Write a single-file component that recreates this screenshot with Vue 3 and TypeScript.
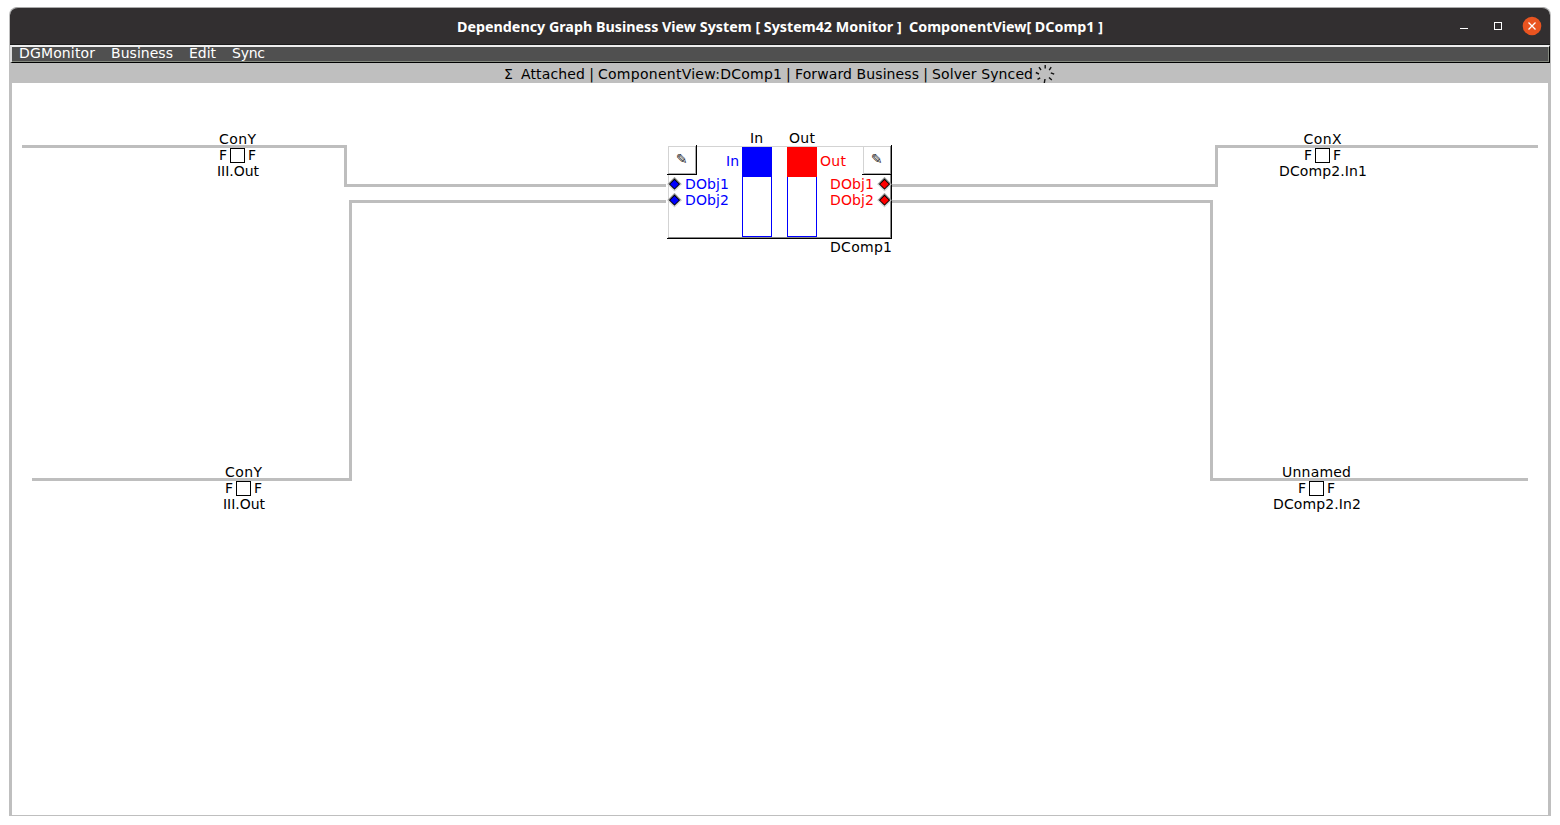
<script setup lang="ts">
interface Label {
  text: string
  x: number
  y: number
  w: number
  color?: string
}

interface Connector {
  name: string
  target: string
  cx: number
  y: number
  nameW: number
  targetW: number
}

const menus: { text: string; w: number }[] = [
  { text: 'DGMonitor', w: 76 },
  { text: 'Business', w: 62 },
  { text: 'Edit', w: 27 },
  { text: 'Sync', w: 33 },
]

const wires: string[] = [
  'M22 146.5H345.5V185.5H666',
  'M32 479.5H350.5V201.5H666',
  'M892 185.5H1216.5V146.5H1538',
  'M892 201.5H1211.5V479.5H1528',
]

const connectors: Connector[] = [
  { name: 'ConY', target: 'III.Out', cx: 237.5, y: 144, nameW: 37, targetW: 42 },
  { name: 'ConY', target: 'III.Out', cx: 243.5, y: 477, nameW: 37, targetW: 42 },
  { name: 'ConX', target: 'DComp2.In1', cx: 1322.5, y: 144, nameW: 38, targetW: 88 },
  { name: 'Unnamed', target: 'DComp2.In2', cx: 1316.5, y: 477, nameW: 69, targetW: 88 },
]

const labels: Label[] = [
  { text: 'In', x: 750, y: 143, w: 13 },
  { text: 'Out', x: 789, y: 143, w: 26 },
  { text: 'In', x: 726, y: 166, w: 13, color: '#00f' },
  { text: 'Out', x: 820, y: 166, w: 26, color: '#f00' },
  { text: 'DObj1', x: 685, y: 189, w: 44, color: '#00f' },
  { text: 'DObj2', x: 685, y: 205, w: 44, color: '#00f' },
  { text: 'DObj1', x: 830, y: 189, w: 44, color: '#f00' },
  { text: 'DObj2', x: 830, y: 205, w: 44, color: '#f00' },
  { text: 'DComp1', x: 830, y: 252, w: 62 },
]

const ports: { x: number; y: number; color: string }[] = [
  { x: 674.5, y: 184.2, color: '#00f' },
  { x: 674.5, y: 200.2, color: '#00f' },
  { x: 884.5, y: 184.2, color: '#f00' },
  { x: 884.5, y: 200.2, color: '#f00' },
]
</script>

<template>
  <div class="desktop">
    <div class="window">
      <header class="titlebar">
        <svg class="title" width="1300" height="36">
          <text x="447" y="24" textLength="646" lengthAdjust="spacingAndGlyphs" xml:space="preserve">Dependency Graph Business View System [ System42 Monitor ]&#160; ComponentView[ DComp1 ]</text>
        </svg>
        <svg class="controls" width="99" height="36">
          <path d="M9 20.5H17" stroke="#fff" fill="none" />
          <rect x="43.5" y="14.5" width="7" height="7" stroke="#fff" fill="none" />
          <circle cx="81" cy="18" r="9.3" fill="#e95420" />
          <path d="M77.5 14.5L84.5 21.5M84.5 14.5L77.5 21.5" stroke="#fff" stroke-width="1.3" />
        </svg>
      </header>
      <nav class="menubar">
        <svg v-for="m in menus" :key="m.text" class="menu" :width="m.w" height="14">
          <text x="0" y="11" :textLength="m.w">{{ m.text }}</text>
        </svg>
      </nav>
      <div class="status">
        <svg width="560" height="20">
          <text x="4" y="16" textLength="9">Σ</text>
          <text x="21" y="16" textLength="64">Attached</text>
          <text x="89.3" y="16">|</text>
          <text x="98" y="16" textLength="184">ComponentView:DComp1</text>
          <text x="286" y="16">|</text>
          <text x="295" y="16" textLength="124">Forward Business</text>
          <text x="423.3" y="16">|</text>
          <text x="432" y="16" textLength="101">Solver Synced</text>
          <path
            d="M545.2 2V5.5M551.2 4.2L549.2 7.2M554.2 11.2L550.8 9.800M551.800 17L549 14.500M544.300 20L545 16M537.500 16.300L540.200 14.800M535.800 9.500L539 11M539 4.200L541 7"
            stroke="#111" stroke-width="1.4" fill="none" />
        </svg>
      </div>
      <main class="canvas">
        <svg width="1536" height="732" viewBox="12 83 1536 732">
          <path v-for="d in wires" :key="d" :d="d" fill="none" stroke="#bebebe" stroke-width="3" />

          <g v-for="(c, i) in connectors" :key="i">
            <text :x="c.cx - c.nameW / 2" :y="c.y" :textLength="c.nameW">{{ c.name }}</text>
            <text :x="c.cx - 18.5" :y="c.y + 16">F</text>
            <rect :x="c.cx - 7" :y="c.y + 4.5" width="14" height="14" fill="#fff" stroke="#000" />
            <text :x="c.cx + 10.5" :y="c.y + 16">F</text>
            <text :x="c.cx + 0.5 - c.targetW / 2" :y="c.y + 32" :textLength="c.targetW">{{ c.target }}</text>
          </g>

          <g shape-rendering="crispEdges" fill="none">
            <path d="M668.5 238V146.5H891" stroke="#d3d3d3" />
            <path d="M668 237.5H890.5V146" stroke="#888" />
            <path d="M667 238.5H891.5V145" stroke="#000" />
            <path d="M668 173.5H695.5V146" stroke="#aaa" />
            <path d="M667 174.5H696.5V145" stroke="#000" />
            <path d="M863.5 174V147" stroke="#d3d3d3" />
            <path d="M864 173.5H890" stroke="#aaa" />
            <path d="M862 174.5H892" stroke="#000" />
            <rect x="742.5" y="147.5" width="29" height="89" fill="#fff" stroke="#00f" />
            <rect x="742" y="147" width="30" height="30" fill="#00f" />
            <rect x="787.5" y="147.5" width="29" height="89" fill="#fff" stroke="#00f" />
            <rect x="787" y="147" width="30" height="30" fill="#f00" />
          </g>

          <text class="pencil" x="676" y="164">✎</text>
          <text class="pencil" x="871" y="164">✎</text>

          <g v-for="(p, i) in ports" :key="'p' + i" :transform="`translate(${p.x} ${p.y})`">
            <path d="M-7.2 0L0 -7.2L7.2 0L0 7.2Z" fill="#ccc" />
            <path d="M-7.2 0L0 -7.2L7.2 0Z" fill="#999" />
            <path d="M-6 0L0 6L6 0Z" fill="#fff" />
            <path d="M-5.6 0L0 -5.6L5.6 0L0 5.6Z" fill="#000" />
            <path d="M-4.3 0L0 -4.3L4.3 0L0 4.3Z" :fill="p.color" />
          </g>

          <text v-for="(l, i) in labels" :key="'l' + i" :x="l.x" :y="l.y" :textLength="l.w" :fill="l.color ?? '#000'">{{ l.text }}</text>
        </svg>
      </main>
    </div>
  </div>
</template>

<style>
body {
  background: #fff;
}
</style>

<style scoped>
.desktop {
  box-sizing: border-box;
  width: 1560px;
  height: 825px;
  padding: 7px 9px 9px;
  overflow: hidden;
  font: 14px "DejaVu Sans", sans-serif;
}
.window {
  width: 1542px;
  height: 809px;
  display: flex;
  flex-direction: column;
  border-radius: 8px 8px 0 0;
  overflow: hidden;
  background: #bfbfbf;
}
svg {
  display: block;
}
.titlebar {
  box-sizing: border-box;
  height: 38px;
  margin-right: 1px;
  margin-left: 1px;
  flex: none;
  display: flex;
  justify-content: space-between;
  border-top: 1px solid #aaa;
  border-bottom: 1px solid #1c1c1c;
  border-radius: 8px 8px 0 0;
  background: #322f30;
}
.title {
  font: bold 14px "Noto Sans", "Open Sans", sans-serif;
  fill: #fff;
}
.menubar {
  box-sizing: border-box;
  height: 18px;
  flex: none;
  margin: 0 1px;
  padding-left: 7px;
  display: flex;
  gap: 16px;
  background: #505050;
  border-top: 2px solid #eee;
  border-left: 2px solid #ddd;
  border-right: 1px solid #000;
  border-bottom: 1px solid #000;
  box-shadow: inset -1px -1px #858a80;
}
.menu {
  fill: #fff;
  overflow: visible;
}
.status {
  height: 20px;
  flex: none;
  padding-left: 491px;
}
.canvas {
  width: 1536px;
  height: 732px;
  margin: 0 3px;
  background: #fff;
}
.pencil {
  fill: #222;
}
</style>
